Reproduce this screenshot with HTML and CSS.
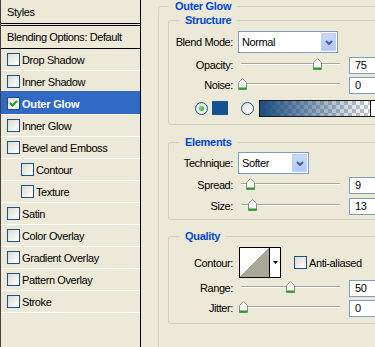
FILE: index.html
```html
<!DOCTYPE html>
<html lang="en">
<head>
    <meta charset="UTF-8">
    <meta name="viewport" content="width=device-width, initial-scale=1.0">
    <title>Layer Style - Outer Glow</title>
    <link rel="stylesheet" href="styles.css">
</head>
<body>
    <div class="dialog">

        <!-- Styles list on the left -->
        <div class="styles-list">
            <div class="list-head">Styles</div>
            <div class="list-blend">Blending Options: Default</div>
            <div class="list-item"><span class="cb"></span>Drop Shadow</div>
            <div class="list-item"><span class="cb"></span>Inner Shadow</div>
            <div class="list-item selected">
                <span class="cb"><svg width="11" height="11" viewBox="0 0 11 11"><path d="M2 5l2.5 2.5L9 3" stroke="#21a121" stroke-width="2" fill="none"/></svg></span>Outer Glow
            </div>
            <div class="list-item"><span class="cb"></span>Inner Glow</div>
            <div class="list-item"><span class="cb"></span>Bevel and Emboss</div>
            <div class="list-item sub"><span class="cb"></span>Contour</div>
            <div class="list-item sub"><span class="cb"></span>Texture</div>
            <div class="list-item"><span class="cb"></span>Satin</div>
            <div class="list-item"><span class="cb"></span>Color Overlay</div>
            <div class="list-item"><span class="cb"></span>Gradient Overlay</div>
            <div class="list-item"><span class="cb"></span>Pattern Overlay</div>
            <div class="list-item"><span class="cb"></span>Stroke</div>
        </div>

        <!-- Outer Glow settings -->
        <div class="settings">
            <div class="group outer">
                <span class="group-title">Outer Glow</span>

                <div class="group structure">
                    <span class="group-title">Structure</span>
                    <div class="row select-row">
                        <span class="lbl">Blend Mode:</span>
                        <div class="select blend-select">
                            <span class="select-text">Normal</span>
                            <span class="select-btn"><svg width="8" height="5" viewBox="0 0 8 5"><path d="M1 1l3 3 3-3" stroke="#4d6185" stroke-width="2" fill="none"/></svg></span>
                        </div>
                    </div>
                    <div class="row">
                        <span class="lbl">Opacity:</span>
                        <div class="slider"><span class="thumb" style="left: 75px"><svg width="9" height="12" viewBox="0 0 9 12"><path d="M0.5 11.5V4.5L4.5 0.5L8.5 4.5V11.5Z" fill="#f7f7f3" stroke="#8e8f8a"/><path d="M0.5 10.5H8.5" stroke="#21a121" stroke-width="2"/></svg></span></div>
                        <span class="num">75</span>
                    </div>
                    <div class="row">
                        <span class="lbl">Noise:</span>
                        <div class="slider"><span class="thumb" style="left: 0px"><svg width="9" height="12" viewBox="0 0 9 12"><path d="M0.5 11.5V4.5L4.5 0.5L8.5 4.5V11.5Z" fill="#f7f7f3" stroke="#8e8f8a"/><path d="M0.5 10.5H8.5" stroke="#21a121" stroke-width="2"/></svg></span></div>
                        <span class="num">0</span>
                    </div>
                    <div class="row color-row">
                        <span class="radio checked"></span>
                        <span class="swatch"></span>
                        <span class="radio"></span>
                        <div class="gradient">
                            <span class="gradient-bar"></span>
                            <span class="gradient-btn"><svg width="5" height="3" viewBox="0 0 5 3"><path d="M0 0h5L2.5 3Z" fill="#000"/></svg></span>
                        </div>
                    </div>
                </div>

                <div class="group elements">
                    <span class="group-title">Elements</span>
                    <div class="row select-row">
                        <span class="lbl">Technique:</span>
                        <div class="select technique-select">
                            <span class="select-text">Softer</span>
                            <span class="select-btn"><svg width="8" height="5" viewBox="0 0 8 5"><path d="M1 1l3 3 3-3" stroke="#4d6185" stroke-width="2" fill="none"/></svg></span>
                        </div>
                    </div>
                    <div class="row">
                        <span class="lbl">Spread:</span>
                        <div class="slider"><span class="thumb" style="left: 8px"><svg width="9" height="12" viewBox="0 0 9 12"><path d="M0.5 11.5V4.5L4.5 0.5L8.5 4.5V11.5Z" fill="#f7f7f3" stroke="#8e8f8a"/><path d="M0.5 10.5H8.5" stroke="#21a121" stroke-width="2"/></svg></span></div>
                        <span class="num">9</span>
                    </div>
                    <div class="row">
                        <span class="lbl">Size:</span>
                        <div class="slider"><span class="thumb" style="left: 10px"><svg width="9" height="12" viewBox="0 0 9 12"><path d="M0.5 11.5V4.5L4.5 0.5L8.5 4.5V11.5Z" fill="#f7f7f3" stroke="#8e8f8a"/><path d="M0.5 10.5H8.5" stroke="#21a121" stroke-width="2"/></svg></span></div>
                        <span class="num">13</span>
                    </div>
                </div>

                <div class="group quality">
                    <span class="group-title">Quality</span>
                    <div class="row contour-row">
                        <span class="lbl">Contour:</span>
                        <div class="contour">
                            <span class="contour-preview"></span>
                            <span class="contour-btn"><svg width="5" height="3" viewBox="0 0 5 3"><path d="M0 0h5L2.5 3Z" fill="#000"/></svg></span>
                        </div>
                        <span class="check"></span>
                        <span class="check-label">Anti-aliased</span>
                    </div>
                    <div class="row">
                        <span class="lbl">Range:</span>
                        <div class="slider"><span class="thumb" style="left: 48px"><svg width="9" height="12" viewBox="0 0 9 12"><path d="M0.5 11.5V4.5L4.5 0.5L8.5 4.5V11.5Z" fill="#f7f7f3" stroke="#8e8f8a"/><path d="M0.5 10.5H8.5" stroke="#21a121" stroke-width="2"/></svg></span></div>
                        <span class="num">50</span>
                    </div>
                    <div class="row">
                        <span class="lbl">Jitter:</span>
                        <div class="slider"><span class="thumb" style="left: 1px"><svg width="9" height="12" viewBox="0 0 9 12"><path d="M0.5 11.5V4.5L4.5 0.5L8.5 4.5V11.5Z" fill="#f7f7f3" stroke="#8e8f8a"/><path d="M0.5 10.5H8.5" stroke="#21a121" stroke-width="2"/></svg></span></div>
                        <span class="num">0</span>
                    </div>
                </div>
            </div>
        </div>
    </div>
</body>
</html>
```
FILE: styles.css
```css
body, html {
    margin: 0;
    padding: 0;
    background-color: #ece9d8; /* XP dialog beige */
    font-family: "Liberation Sans", Arial, sans-serif;
    font-size: 11px;
    letter-spacing: -0.4px;
    color: #000;
    overflow: hidden;
}

.dialog {
    display: flex;
    width: 375px;
    height: 347px;
    overflow: hidden;
}

/* ---- left list ---- */

.styles-list {
    width: 139px;
    flex-shrink: 0;
    border-left: 1px solid #404040;
    border-right: 1px solid #000;
}

.list-head {
    height: 23px;
    line-height: 24px;
    padding-left: 6px;
    border-bottom: 1px solid #000;
}

.list-blend {
    height: 22px;
    line-height: 22px;
    padding-left: 6px;
    margin-top: 1px;
    border-top: 1px solid #000;
    border-bottom: 1px solid #000;
    white-space: nowrap;
}

.list-item {
    display: flex;
    align-items: center;
    height: 21px;
    padding-left: 6px;
    border-bottom: 1px solid #fff;
}

.list-item.sub {
    padding-left: 20px;
}

.list-item.selected {
    background-color: #316ac5;
    box-shadow: 0 -2px 0 #316ac5; /* covers the line above */
    color: #fff;
    font-weight: bold;
    letter-spacing: -0.2px;
}

.cb {
    width: 11px;
    height: 11px;
    border: 1px solid #1c5180;
    background: linear-gradient(135deg, #dcdcd5, #fff);
    margin-right: 2px;
    flex-shrink: 0;
}

.cb svg {
    display: block;
}

/* ---- right settings ---- */

.settings {
    flex: 1;
    padding-left: 17px;
    padding-top: 6px;
}

.group {
    position: relative;
    border: 1px solid #d0d0bf;
    border-radius: 3px;
}

.group-title {
    position: absolute;
    top: -7px;
    left: 10px;
    padding: 0 6px;
    line-height: 13px;
    background-color: #ece9d8;
    color: #0046d5;
    font-weight: bold;
    letter-spacing: -0.3px;
    white-space: nowrap;
}

.outer {
    width: 260px;
    height: 400px;
    padding-left: 9px;
    padding-top: 13px;
}

.structure, .elements, .quality {
    width: 220px;
}

.structure {
    padding: 10px 0 6px;
}

.elements {
    margin-top: 17px;
    padding: 9px 0 3px;
}

.quality {
    margin-top: 16px;
    padding: 10px 0 5px;
}

.row {
    display: flex;
    align-items: center;
    height: 20px;
}

.select-row {
    height: 22px;
    margin-bottom: 2px;
}

.elements .select-row {
    margin-bottom: 1px;
}

.elements .row + .row + .row {
    margin-top: 1px;
}

.lbl {
    width: 64px;
    margin-right: 5px;
    text-align: right;
    flex-shrink: 0;
}

/* dropdowns */

.select {
    display: flex;
    align-items: center;
    height: 20px;
    border: 1px solid #7f9db9;
    background-color: #fff;
    padding: 0 1px 0 3px;
}

.blend-select {
    width: 94px;
}

.technique-select {
    width: 65px;
}

.select-text {
    flex: 1;
}

.select-btn {
    width: 15px;
    height: 18px;
    display: flex;
    align-items: center;
    justify-content: center;
    background: linear-gradient(#c9dafc, #b2c8f6);
    border: 1px solid #bed0f8;
    box-sizing: border-box;
}

.select-btn svg {
    display: block;
}

/* sliders */

.slider {
    position: relative;
    width: 106px;
    height: 20px;
    margin-right: 5px;
    flex-shrink: 0;
}

.slider::before {
    content: "";
    position: absolute;
    left: 3px;
    right: 4px;
    top: 8px;
    height: 1px;
    background-color: #a7a699;
    border-bottom: 1px solid #fff;
}

.thumb {
    position: absolute;
    top: 3px;
}

.thumb svg {
    display: block;
}

.num {
    width: 34px;
    height: 15px;
    line-height: 15px;
    padding-left: 5px;
    border: 1px solid #7f9db9;
    background-color: #fff;
    flex-shrink: 0;
}

/* colour / gradient choice */

.color-row {
    margin-top: 3px;
    padding-left: 26px;
}

.radio {
    width: 11px;
    height: 11px;
    border: 1px solid #1c5180;
    border-radius: 50%;
    background: linear-gradient(135deg, #dcdcd5, #fff);
    flex-shrink: 0;
    display: flex;
    align-items: center;
    justify-content: center;
}

.radio.checked::after {
    content: "";
    width: 5px;
    height: 5px;
    border-radius: 50%;
    background: radial-gradient(circle at 35% 35%, #6fe36f, #21a121);
}

.swatch {
    width: 16px;
    height: 14px;
    margin: 0 13px 0 4px;
    background-color: #135190;
}

.gradient {
    display: flex;
    height: 15px;
    margin-left: 5px;
    border: 1px solid #1a1a1a;
}

.gradient-bar {
    width: 110px;
    background:
        linear-gradient(to right, #1c4c80, rgba(28, 76, 128, 0)),
        repeating-conic-gradient(#c8c8c8 0 25%, #fff 0 50%) 0 0 / 8px 8px;
}

.gradient-btn {
    width: 14px;
    display: flex;
    align-items: center;
    justify-content: center;
    border-left: 1px solid #1a1a1a;
    background-color: #fff;
}

/* contour */

.contour-row {
    height: 31px;
}

.contour {
    display: flex;
    width: 40px;
    height: 29px;
    margin-left: 1px;
    border: 1px solid #000;
    background-color: #fff;
}

.contour-preview {
    width: 29px;
    background: linear-gradient(to bottom right, #fcfcfa 50%, #a8a799 50%);
}

.contour-btn {
    flex: 1;
    display: flex;
    align-items: center;
    justify-content: center;
    border-left: 1px solid #000;
}

.check {
    width: 11px;
    height: 11px;
    margin: 0 2px 0 13px;
    border: 1px solid #1c5180;
    background: linear-gradient(135deg, #dcdcd5, #fff);
}
```
